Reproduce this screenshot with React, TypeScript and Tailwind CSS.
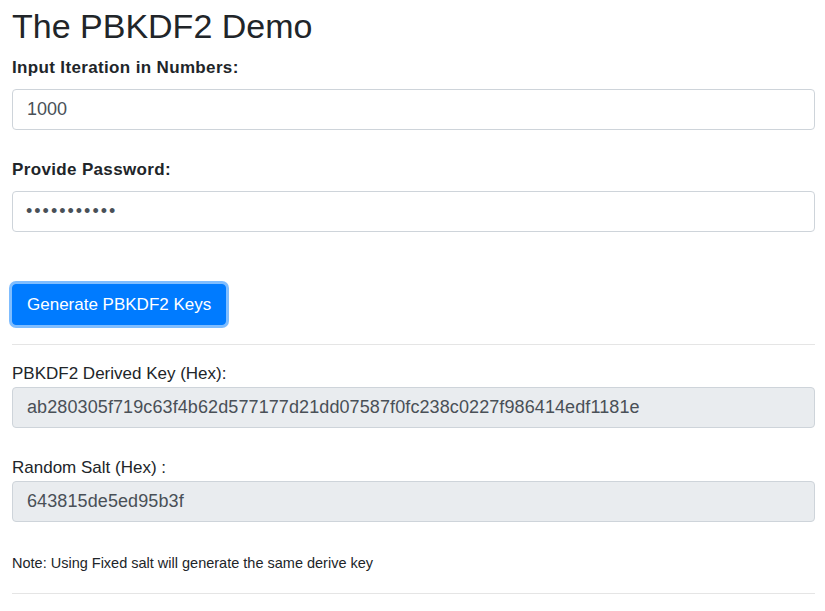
import React from "react";

const font = { fontFamily: '"Liberation Sans", Arial, sans-serif' };

export default function App() {
  return (
    <div
      className="bg-white text-[#212529] pl-[12px] pr-[10px] min-h-[611px]"
      style={font}
    >
      <h1 className="text-[34px] leading-[50px] font-normal pt-[1px] m-0">
        The PBKDF2 Demo
      </h1>

      <label className="block mt-[5px] text-[17px] leading-[24px] font-bold tracking-[0.35px]">
        Input Iteration in Numbers:
      </label>
      <input
        readOnly
        value="1000"
        className="mt-[9px] block w-full h-[41px] px-[14px] text-[18px] text-[#495057] bg-white border border-[#ced4da] rounded-[4px] outline-none"
      />

      <label className="block mt-[28px] text-[17px] leading-[24px] font-bold tracking-[0.35px]">
        Provide Password:
      </label>
      <input
        readOnly
        value="•••••••••••"
        className="mt-[9px] block w-full h-[41px] px-[13px] text-[18px] tracking-[2px] text-[#495057] bg-white border border-[#ced4da] rounded-[4px] outline-none"
      />

      <div className="mt-[52px]">
        <button className="h-[41px] px-[14px] text-[17px] text-white bg-[#007bff] border border-[#007bff] rounded-[4px] shadow-[0_0_0_3px_rgba(0,123,255,0.5)]">
          Generate PBKDF2 Keys
        </button>
      </div>

      <hr className="mt-[19px] border-0 border-t border-[#e5e5e5]" />

      <label className="block mt-[17px] text-[17px] leading-[24px]">
        PBKDF2 Derived Key (Hex):
      </label>
      <input
        readOnly
        value="ab280305f719c63f4b62d577177d21dd07587f0fc238c0227f986414edf1181e"
        className="mt-[1px] block w-full h-[41px] px-[14px] text-[18px] tracking-[0.1px] text-[#495057] bg-[#e9ecef] border border-[#ced4da] rounded-[4px] outline-none"
      />

      <label className="block mt-[28px] text-[17px] leading-[24px]">
        Random Salt (Hex) :
      </label>
      <input
        readOnly
        value="643815de5ed95b3f"
        className="mt-[1px] block w-full h-[41px] px-[14px] text-[18px] tracking-[0.1px] text-[#495057] bg-[#e9ecef] border border-[#ced4da] rounded-[4px] outline-none"
      />

      <p className="mt-[31px] text-[14.5px] leading-[20px]">
        Note: Using Fixed salt will generate the same derive key
      </p>

      <hr className="mt-[20px] border-0 border-t border-[#e5e5e5]" />
    </div>
  );
}
